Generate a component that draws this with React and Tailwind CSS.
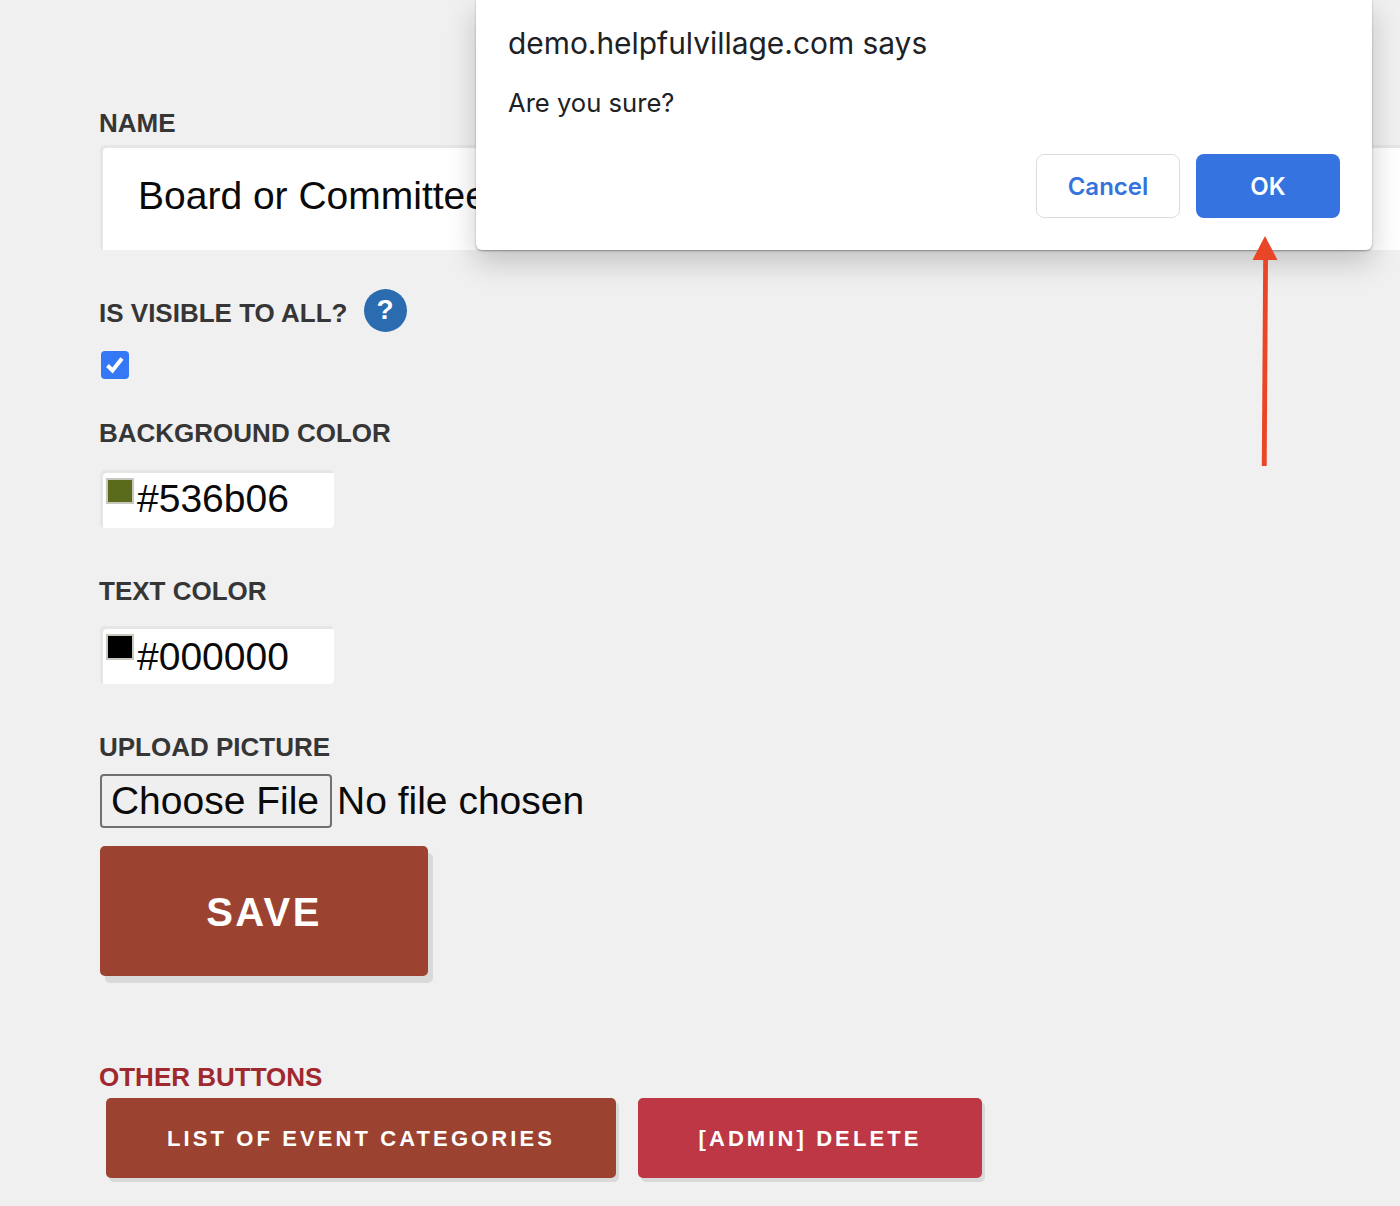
import React from 'react';

const labelClass = "block -ml-[1px] text-[26px] leading-[30px] font-bold text-[#363636]";

const ColorField = ({ color, value, textTop }) => (
    <div className="w-[234px] h-[58px] bg-white rounded-[4px] shadow-[inset_3px_3px_0_#e6e6e6] flex items-start pl-[6px] pt-[7px]">
        <span className="block w-[28px] h-[26px] border-2 border-[#c8c8c0] shrink-0 mt-[1px]" style={{ backgroundColor: color }}></span>
        <span className="ml-[3px] text-[39px] leading-[42px] text-[#0a0a0a]" style={{ marginTop: textTop }}>{value}</span>
    </div>
);

const ArrowUp = () => (
    <svg width="28" height="232" viewBox="0 0 28 232" className="absolute left-[1251px] top-[235px]">
        <polygon points="14,1 26.500,25 1.500,25" fill="#e94628" />
        <polygon points="12.200,22 17,22 15.700,231 10.800,231" fill="#e94628" />
    </svg>
);

const App = () => {
    return (
        <div className="relative w-[1400px] h-[1206px] overflow-hidden bg-[#f0f0f0] font-['Liberation_Sans',Arial,sans-serif] pl-[100px] pt-[108px]">
            <label className={labelClass}>NAME</label>
            <div className="mt-[7px] w-[1320px] h-[105px] bg-white rounded-[4px] shadow-[inset_3px_3px_0_#e6e6e6] flex items-center pl-[38px] pb-[2px]">
                <span className="text-[39px] text-[#0a0a0a]">Board or Committee</span>
            </div>

            <div className="mt-[37px] flex items-center h-[46px]">
                <label className={`${labelClass} mt-[5px]`}>IS VISIBLE TO ALL?</label>
                <span className="ml-[17px] w-[43px] h-[43px] pr-[2px] rounded-full bg-[#2b6cb0] text-white flex items-center justify-center text-[28px] font-bold leading-none">?</span>
            </div>
            <div className="mt-[18px] w-[28px] h-[28px] rounded-[4px] bg-[#3478f6] ml-[1px] flex items-center justify-center">
                <svg width="24" height="24" viewBox="0 0 24 24" fill="none">
                    <path d="M4.500 12.500L9.500 17.500L19 5.500" stroke="#fff" strokeWidth="4" />
                </svg>
            </div>

            <label className={`${labelClass} mt-[39px]`}>BACKGROUND COLOR</label>
            <div className="mt-[22px]">
                <ColorField color="#5a6b1c" value="#536b06" textTop="1px" />
            </div>

            <label className={`${labelClass} mt-[48px]`}>TEXT COLOR</label>
            <div className="mt-[20px]">
                <ColorField color="#000000" value="#000000" textTop="3px" />
            </div>

            <label className={`${labelClass} mt-[48px]`}>UPLOAD PICTURE</label>
            <div className="mt-[12px] flex items-center">
                <button className="w-[232px] h-[54px] pb-[2px] pr-[2px] border-2 border-[#707070] rounded-[4px] bg-[#efefef] text-[39px] leading-none text-[#0a0a0a]">Choose File</button>
                <span className="ml-[5px] pb-[2px] text-[39px] leading-none text-[#0a0a0a]">No file chosen</span>
            </div>

            <button className="mt-[18px] block w-[328px] h-[130px] pt-[2px] rounded-[5px] bg-[#9c4230] shadow-[5px_7px_0_#d9d9d9] text-white text-[40px] font-bold tracking-[2.400px]">SAVE</button>

            <label className="block -ml-[1px] mt-[86px] text-[26px] leading-[30px] font-bold text-[#a0282f]">OTHER BUTTONS</label>
            <div className="mt-[6px] ml-[6px] flex gap-[22px]">
                <button className="w-[510px] h-[80px] rounded-[5px] bg-[#9c4230] shadow-[3px_4px_0_#d9d9d9] text-white text-[22px] font-bold tracking-[3.100px]">LIST OF EVENT CATEGORIES</button>
                <button className="w-[344px] h-[80px] rounded-[5px] bg-[#bd3844] shadow-[3px_4px_0_#d9d9d9] text-white text-[22px] font-bold tracking-[3.100px]">[ADMIN] DELETE</button>
            </div>

            <div className="absolute left-[476px] top-0 w-[896px] h-[250px] bg-white rounded-b-[6px] shadow-[0_1px_2px_rgba(0,0,0,0.35),0_12px_30px_rgba(0,0,0,0.2)] font-['Inter',sans-serif]">
                <p className="absolute left-[32px] top-[25px] text-[29.900px] leading-[36px] text-[#202124]">demo.helpfulvillage.com says</p>
                <p className="absolute left-[32px] top-[88px] text-[25.600px] leading-[30px] text-[#202124]">Are you sure?</p>
                <div className="absolute right-[32px] top-[154px] flex gap-[16px]">
                    <button className="w-[144px] h-[64px] pt-[2px] rounded-[8px] border border-[#dadce0] bg-white text-[#3573dc] text-[24px] font-semibold">Cancel</button>
                    <button className="w-[144px] h-[64px] pt-[2px] rounded-[8px] bg-[#3573e0] text-white text-[24px] font-semibold">OK</button>
                </div>
            </div>
            <ArrowUp />
        </div>
    );
};

export default App;
